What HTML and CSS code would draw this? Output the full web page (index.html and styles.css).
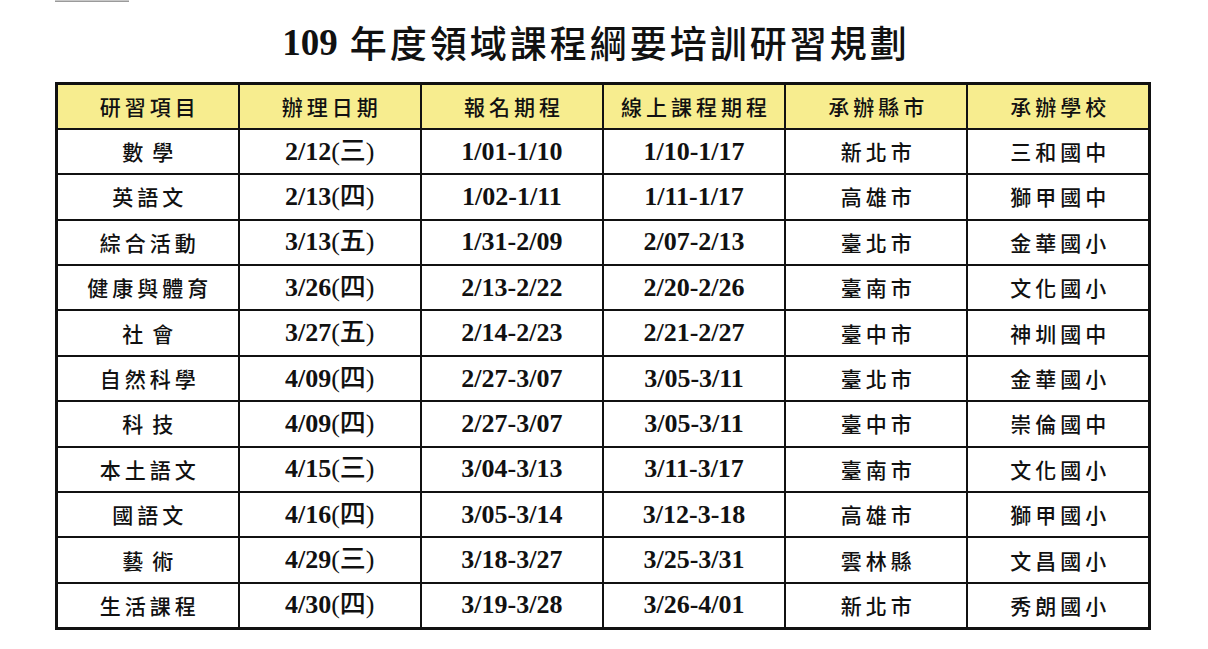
FILE: index.html
```html
<!DOCTYPE html>
<html lang="zh-Hant">
<head>
<meta charset="utf-8">
<title>109 年度領域課程綱要培訓研習規劃</title>
<link rel="stylesheet" href="styles.css">
</head>
<body>
<div class="page">
  <div class="topbar"></div>
  <h1 class="title"><span class="num">109</span> <span class="cjk">年度領域課程綱要培訓研習規劃</span></h1>
  <table class="plan">
    <colgroup>
      <col class="c"><col class="c"><col class="c"><col class="c"><col class="c"><col class="c">
    </colgroup>
    <thead>
      <tr>
        <th>研習項目</th><th>辦理日期</th><th>報名期程</th><th>線上課程期程</th><th>承辦縣市</th><th>承辦學校</th>
      </tr>
    </thead>
    <tbody>
      <tr><td class="t wide">數學</td><td class="n">2/12<span class="wd">(三)</span></td><td class="n">1/01-1/10</td><td class="n">1/10-1/17</td><td class="t">新北市</td><td class="t">三和國中</td></tr>
      <tr><td class="t">英語文</td><td class="n">2/13<span class="wd">(四)</span></td><td class="n">1/02-1/11</td><td class="n">1/11-1/17</td><td class="t">高雄市</td><td class="t">獅甲國中</td></tr>
      <tr><td class="t">綜合活動</td><td class="n">3/13<span class="wd">(五)</span></td><td class="n">1/31-2/09</td><td class="n">2/07-2/13</td><td class="t">臺北市</td><td class="t">金華國小</td></tr>
      <tr><td class="t">健康與體育</td><td class="n">3/26<span class="wd">(四)</span></td><td class="n">2/13-2/22</td><td class="n">2/20-2/26</td><td class="t">臺南市</td><td class="t">文化國小</td></tr>
      <tr><td class="t wide">社會</td><td class="n">3/27<span class="wd">(五)</span></td><td class="n">2/14-2/23</td><td class="n">2/21-2/27</td><td class="t">臺中市</td><td class="t">神圳國中</td></tr>
      <tr><td class="t">自然科學</td><td class="n">4/09<span class="wd">(四)</span></td><td class="n">2/27-3/07</td><td class="n">3/05-3/11</td><td class="t">臺北市</td><td class="t">金華國小</td></tr>
      <tr><td class="t wide">科技</td><td class="n">4/09<span class="wd">(四)</span></td><td class="n">2/27-3/07</td><td class="n">3/05-3/11</td><td class="t">臺中市</td><td class="t">崇倫國中</td></tr>
      <tr><td class="t">本土語文</td><td class="n">4/15<span class="wd">(三)</span></td><td class="n">3/04-3/13</td><td class="n">3/11-3/17</td><td class="t">臺南市</td><td class="t">文化國小</td></tr>
      <tr><td class="t">國語文</td><td class="n">4/16<span class="wd">(四)</span></td><td class="n">3/05-3/14</td><td class="n">3/12-3-18</td><td class="t">高雄市</td><td class="t">獅甲國小</td></tr>
      <tr><td class="t wide">藝術</td><td class="n">4/29<span class="wd">(三)</span></td><td class="n">3/18-3/27</td><td class="n">3/25-3/31</td><td class="t">雲林縣</td><td class="t">文昌國小</td></tr>
      <tr><td class="t">生活課程</td><td class="n">4/30<span class="wd">(四)</span></td><td class="n">3/19-3/28</td><td class="n">3/26-4/01</td><td class="t">新北市</td><td class="t">秀朗國小</td></tr>
    </tbody>
  </table>
</div>
</body>
</html>
```
FILE: styles.css
```css
html, body {
  margin: 0;
  padding: 0;
  background: #ffffff;
}

.page {
  width: 1208px;
  height: 649px;
  overflow: hidden;
  padding-left: 55px;
  box-sizing: border-box;
  color: #111111;
}

.topbar {
  width: 74px;
  height: 1px;
  background: #c8c8c8;
  border-bottom: 1px solid #9a9a9a;
}

.title {
  margin: 0;
  width: 1096px;
  height: 80px;
  display: flex;
  align-items: center;
  justify-content: center;
  padding-right: 14px;
  box-sizing: border-box;
  font-weight: normal;
  white-space: nowrap;
  line-height: 1;
}

.title .num {
  font-family: "Liberation Serif", serif;
  font-weight: bold;
  font-size: 37px;
  margin-right: 12px;
}

.title .cjk {
  font-family: "Noto Sans CJK TC", "Noto Sans CJK SC", sans-serif;
  font-weight: 500;
  font-size: 37px;
  letter-spacing: 3px;
}

.plan {
  border-collapse: collapse;
  table-layout: fixed;
  width: 1096px;
  border: 3px solid #111111;
}

.plan col.c {
  width: 182px;
}

.plan tr {
  height: 45.4px;
}

.plan th,
.plan td {
  border: 2px solid #111111;
  height: 41px;
  padding: 0;
  text-align: center;
  vertical-align: middle;
  white-space: nowrap;
  line-height: 1;
}

.plan th {
  background: #f7ed8f;
  font-family: "Noto Sans CJK TC", "Noto Sans CJK SC", sans-serif;
  font-weight: 500;
  font-size: 21px;
  letter-spacing: 4px;
  text-indent: 4px;
}

.plan td.t {
  font-family: "Noto Sans CJK TC", "Noto Sans CJK SC", sans-serif;
  font-weight: 500;
  font-size: 21px;
  letter-spacing: 4px;
  text-indent: 4px;
}

.plan td.t.wide {
  letter-spacing: 9px;
  text-indent: 9px;
}

.plan td.n {
  font-family: "Liberation Serif", serif;
  font-weight: bold;
  font-size: 26px;
}

.plan td.n .wd {
  font-family: "Liberation Serif", "Noto Sans CJK TC", serif;
  font-weight: 500;
}
```
